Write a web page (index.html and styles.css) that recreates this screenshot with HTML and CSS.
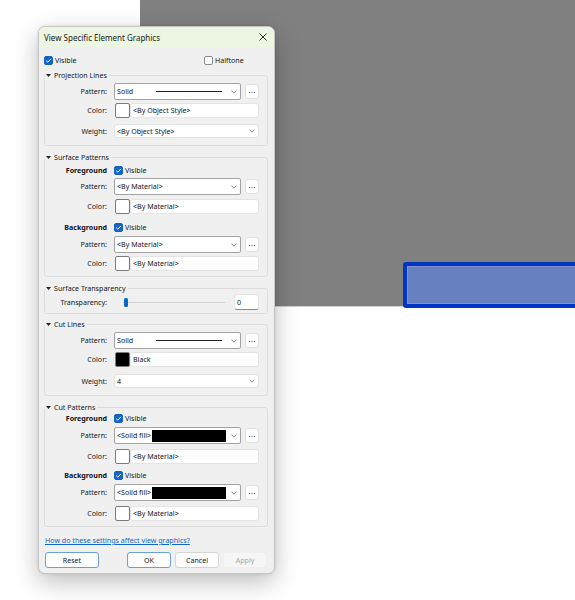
FILE: index.html
```html
<!DOCTYPE html>
<html lang="en">
<head>
<meta charset="utf-8">
<title>View Specific Element Graphics</title>
<link rel="stylesheet" href="styles.css">
</head>
<body>
<div class="stage">
  <div class="view-area"></div>
  <div class="selected-element"></div>

  <div class="dialog">
    <div class="titlebar">
      <span class="title">View Specific Element Graphics</span>
      <svg class="close" viewBox="0 0 8 8"><path d="M0.5 0.5L7.5 7.5M7.5 0.5L0.5 7.5"/></svg>
    </div>
    <div class="content">
      <div class="top-row">
        <div class="check"><span class="box on"><svg viewBox="0 0 9 9"><path d="M2.1 4.6L3.8 6.2L6.9 2.9"/></svg></span><span>Visible</span></div>
        <div class="check"><span class="box"></span><span>Halftone</span></div>
      </div>

      <fieldset class="group g1">
        <legend><svg class="tri" viewBox="0 0 5 3"><polygon points="0,0 5,0 2.5,3"/></svg>Projection Lines</legend>
        <div class="row">
          <span class="lbl">Pattern:</span>
          <div class="ctl">
            <div class="combo"><span class="ctext">Solid</span><span class="pline"></span><svg class="chev" viewBox="0 0 6 4"><polyline points="0.5,0.6 3,3.2 5.5,0.6"/></svg></div>
            <span class="more"><svg viewBox="0 0 14 15"><rect x="4" y="8" width="1" height="1"/><rect x="6.5" y="8" width="1" height="1"/><rect x="9" y="8" width="1" height="1"/></svg></span>
          </div>
        </div>
        <div class="row m3">
          <span class="lbl">Color:</span>
          <div class="color"><span class="swatch"></span><span class="field">&lt;By Object Style&gt;</span></div>
        </div>
        <div class="row m6">
          <span class="lbl">Weight:</span>
          <div class="dropdown"><span>&lt;By Object Style&gt;</span><svg class="chev" viewBox="0 0 6 4"><polyline points="0.5,0.6 3,3.2 5.5,0.6"/></svg></div>
        </div>
      </fieldset>

      <fieldset class="group g2">
        <legend><svg class="tri" viewBox="0 0 5 3"><polygon points="0,0 5,0 2.5,3"/></svg>Surface Patterns</legend>
        <div class="row">
          <span class="lbl strong">Foreground</span>
          <div class="check"><span class="box on"><svg viewBox="0 0 9 9"><path d="M2.1 4.6L3.8 6.2L6.9 2.9"/></svg></span><span>Visible</span></div>
        </div>
        <div class="row m3">
          <span class="lbl">Pattern:</span>
          <div class="ctl">
            <div class="combo"><span class="ctext">&lt;By Material&gt;</span><svg class="chev" viewBox="0 0 6 4"><polyline points="0.5,0.6 3,3.2 5.5,0.6"/></svg></div>
            <span class="more"><svg viewBox="0 0 14 15"><rect x="4" y="8" width="1" height="1"/><rect x="6.5" y="8" width="1" height="1"/><rect x="9" y="8" width="1" height="1"/></svg></span>
          </div>
        </div>
        <div class="row m4">
          <span class="lbl">Color:</span>
          <div class="color"><span class="swatch"></span><span class="field">&lt;By Material&gt;</span></div>
        </div>
        <div class="row m9">
          <span class="lbl strong">Background</span>
          <div class="check"><span class="box on"><svg viewBox="0 0 9 9"><path d="M2.1 4.6L3.8 6.2L6.9 2.9"/></svg></span><span>Visible</span></div>
        </div>
        <div class="row m4">
          <span class="lbl">Pattern:</span>
          <div class="ctl">
            <div class="combo"><span class="ctext">&lt;By Material&gt;</span><svg class="chev" viewBox="0 0 6 4"><polyline points="0.5,0.6 3,3.2 5.5,0.6"/></svg></div>
            <span class="more"><svg viewBox="0 0 14 15"><rect x="4" y="8" width="1" height="1"/><rect x="6.5" y="8" width="1" height="1"/><rect x="9" y="8" width="1" height="1"/></svg></span>
          </div>
        </div>
        <div class="row m3">
          <span class="lbl">Color:</span>
          <div class="color"><span class="swatch"></span><span class="field">&lt;By Material&gt;</span></div>
        </div>
      </fieldset>

      <fieldset class="group g3">
        <legend><svg class="tri" viewBox="0 0 5 3"><polygon points="0,0 5,0 2.5,3"/></svg>Surface Transparency</legend>
        <div class="row">
          <span class="lbl">Transparency:</span>
          <div class="ctl">
            <div class="slider"><span class="thumb"></span></div>
            <span class="num">0</span>
          </div>
        </div>
      </fieldset>

      <fieldset class="group g4">
        <legend><svg class="tri" viewBox="0 0 5 3"><polygon points="0,0 5,0 2.5,3"/></svg>Cut Lines</legend>
        <div class="row">
          <span class="lbl">Pattern:</span>
          <div class="ctl">
            <div class="combo"><span class="ctext">Solid</span><span class="pline"></span><svg class="chev" viewBox="0 0 6 4"><polyline points="0.5,0.6 3,3.2 5.5,0.6"/></svg></div>
            <span class="more"><svg viewBox="0 0 14 15"><rect x="4" y="8" width="1" height="1"/><rect x="6.5" y="8" width="1" height="1"/><rect x="9" y="8" width="1" height="1"/></svg></span>
          </div>
        </div>
        <div class="row m3">
          <span class="lbl">Color:</span>
          <div class="color"><span class="swatch black"></span><span class="field">Black</span></div>
        </div>
        <div class="row m7">
          <span class="lbl">Weight:</span>
          <div class="dropdown"><span>4</span><svg class="chev" viewBox="0 0 6 4"><polyline points="0.5,0.6 3,3.2 5.5,0.6"/></svg></div>
        </div>
      </fieldset>

      <fieldset class="group g5">
        <legend><svg class="tri" viewBox="0 0 5 3"><polygon points="0,0 5,0 2.5,3"/></svg>Cut Patterns</legend>
        <div class="row">
          <span class="lbl strong">Foreground</span>
          <div class="check"><span class="box on"><svg viewBox="0 0 9 9"><path d="M2.1 4.6L3.8 6.2L6.9 2.9"/></svg></span><span>Visible</span></div>
        </div>
        <div class="row m4">
          <span class="lbl">Pattern:</span>
          <div class="ctl">
            <div class="combo"><span class="ctext">&lt;Solid fill&gt;</span><span class="fill-sample"></span><svg class="chev" viewBox="0 0 6 4"><polyline points="0.5,0.6 3,3.2 5.5,0.6"/></svg></div>
            <span class="more"><svg viewBox="0 0 14 15"><rect x="4" y="8" width="1" height="1"/><rect x="6.5" y="8" width="1" height="1"/><rect x="9" y="8" width="1" height="1"/></svg></span>
          </div>
        </div>
        <div class="row m5">
          <span class="lbl">Color:</span>
          <div class="color"><span class="swatch"></span><span class="field">&lt;By Material&gt;</span></div>
        </div>
        <div class="row m7">
          <span class="lbl strong">Background</span>
          <div class="check"><span class="box on"><svg viewBox="0 0 9 9"><path d="M2.1 4.6L3.8 6.2L6.9 2.9"/></svg></span><span>Visible</span></div>
        </div>
        <div class="row m4">
          <span class="lbl">Pattern:</span>
          <div class="ctl">
            <div class="combo"><span class="ctext">&lt;Solid fill&gt;</span><span class="fill-sample"></span><svg class="chev" viewBox="0 0 6 4"><polyline points="0.5,0.6 3,3.2 5.5,0.6"/></svg></div>
            <span class="more"><svg viewBox="0 0 14 15"><rect x="4" y="8" width="1" height="1"/><rect x="6.5" y="8" width="1" height="1"/><rect x="9" y="8" width="1" height="1"/></svg></span>
          </div>
        </div>
        <div class="row m5">
          <span class="lbl">Color:</span>
          <div class="color"><span class="swatch"></span><span class="field">&lt;By Material&gt;</span></div>
        </div>
      </fieldset>

      <a class="help" href="#">How do these settings affect view graphics?</a>

      <div class="buttons">
        <button class="btn reset focus">Reset</button>
        <button class="btn focus">OK</button>
        <button class="btn">Cancel</button>
        <button class="btn disabled">Apply</button>
      </div>
    </div>
  </div>
</div>
</body>
</html>
```
FILE: styles.css
```css
* { box-sizing: border-box; }
html, body { margin: 0; padding: 0; }
body {
  width: 575px;
  height: 600px;
  overflow: hidden;
  background: #ffffff;
  font-family: "Noto Sans", "Liberation Sans", sans-serif;
  font-size: 7.1px;
  line-height: 9px;
  color: #161616;
}
.stage { position: relative; width: 575px; height: 600px; }

.view-area {
  position: absolute;
  left: 140px; top: 0;
  width: 435px; height: 307px;
  background: #808080;
  border-bottom: 1px solid #cfcfcf;
}
.selected-element {
  position: absolute;
  left: 403px; top: 262px;
  width: 180px; height: 46px;
  background: #6680c0;
  border: 4px solid #0037c2;
  border-radius: 3px;
  box-shadow: inset 0 0 0 1px #7d93cc;
}

.dialog {
  position: absolute;
  left: 38px; top: 26px;
  width: 237px; height: 548px;
  background: #f0f0f0;
  border: 1px solid #c6c6c6;
  border-radius: 7px;
  overflow: hidden;
  box-shadow: 0 8px 24px rgba(0,0,0,0.26), 0 0 3px rgba(0,0,0,0.12);
}
.titlebar {
  height: 20px;
  background: #edf5e3;
  display: flex;
  align-items: center;
  justify-content: space-between;
  padding: 0 7px 0 5px;
}
.title { font-size: 8px; line-height: 11px; color: #1a1a1a; }
.close { width: 8px; height: 8px; }
.close path { stroke: #333; stroke-width: 1; fill: none; }

.content { padding: 9px 6px 0 5px; }

.top-row {
  display: grid;
  grid-template-columns: 160px auto;
  height: 9px;
  align-items: center;
}
.check { display: flex; align-items: center; gap: 2px; height: 9px; }
.box {
  width: 9px; height: 9px;
  border: 1px solid #8a8a8a;
  border-radius: 2px;
  background: #ffffff;
  display: block;
  flex: none;
}
.box.on { background: #1464c6; border-color: #1464c6; }
.box svg { display: block; width: 9px; height: 9px; margin: -1px; }
.box path { stroke: #ffffff; stroke-width: 1; fill: none; }

.group {
  margin: 0;
  padding: 0;
  min-width: 0;
  border: 1px solid #dcdcdc;
  border-radius: 3px;
}
.group legend {
  padding: 0 2px 0 1px;
  height: 12px;
  line-height: 12px;
  color: #161616;
}
.tri { width: 5px; height: 3px; margin-right: 3px; vertical-align: 1px; }
.tri polygon { fill: #222; }

.g1 { margin-top: 4px; padding: 2px 0 7px; }
.g2 { margin-top: 5px; padding: 3px 0 5px; }
.g3 { margin-top: 5px; padding: 0 0 3px; }
.g4 { margin-top: 4px; padding: 2px 0 7px; }
.g5 { margin-top: 5px; padding: 1px 0 5px; }

.m3 { margin-top: 3px; }
.m4 { margin-top: 4px; }
.m5 { margin-top: 5px; }
.m6 { margin-top: 6px; }
.m7 { margin-top: 7px; }
.m9 { margin-top: 9px; }

.row {
  display: grid;
  grid-template-columns: 62px 145px;
  column-gap: 7px;
  align-items: center;
}
.lbl { text-align: right; white-space: nowrap; }
.lbl.strong { font-weight: bold; color: #111; }

.ctl { display: flex; align-items: center; }

.combo {
  width: 127px; height: 17px;
  background: #ffffff;
  border: 1px solid #a3a3a3;
  border-radius: 2px;
  display: flex;
  align-items: center;
  padding: 0 3px 0 2px;
}
.ctext { flex: 1; white-space: nowrap; }
.pline { width: 66px; height: 1px; background: #222; margin-right: 9px; }
.fill-sample { width: 74px; height: 12px; background: #000; margin-right: 5px; }
.chev { width: 6px; height: 4px; flex: none; }
.chev polyline { stroke: #666; stroke-width: 0.8; fill: none; }

.more {
  width: 14px; height: 15px;
  margin-left: 4px;
  background: #fdfdfd;
  border: 1px solid #e0e0e0;
  border-radius: 3px;
  display: block;
}
.more svg { display: block; width: 14px; height: 15px; margin: -1px; }
.more rect { fill: #2e4c7e; }

.color { display: flex; width: 144px; height: 15px; margin-left: 1px; }
.swatch {
  width: 15px; height: 15px;
  border: 1px solid #7b7b7b;
  border-radius: 2px;
  background: #ffffff;
  flex: none;
}
.swatch.black { background: #000000; }
.field {
  flex: 1;
  background: #ffffff;
  border: 1px solid #e4e4e4;
  border-radius: 3px;
  padding-left: 2px;
  display: flex;
  align-items: center;
}

.dropdown {
  width: 145px; height: 14px;
  background: #ffffff;
  border: 1px solid #e2e2e2;
  border-radius: 3px;
  padding: 0 3px 0 2px;
  display: flex;
  align-items: center;
  justify-content: space-between;
}

.slider {
  width: 102px; height: 9px;
  margin-left: 9px;
  background: linear-gradient(#d2d2d2, #d2d2d2) center / 100% 1px no-repeat;
  display: flex;
}
.thumb { width: 4px; height: 9px; margin-left: 1px; background: #0a67c8; border-radius: 1.5px; }
.num {
  width: 25px; height: 16px;
  margin-left: 9px;
  background: #ffffff;
  border: 1px solid #e4e4e4;
  border-bottom-color: #8a8a8a;
  border-radius: 3px;
  padding-left: 2px;
  display: flex;
  align-items: center;
}

.help {
  display: block;
  margin: 8px 0 0 1px;
  height: 10px;
  line-height: 10px;
  color: #1066c8;
  text-decoration: underline;
}

.buttons { display: flex; gap: 4px; margin-top: 7px; padding: 0 1px; }
.btn {
  width: 44px; height: 16px;
  padding: 0;
  font: inherit;
  color: #1b1b1b;
  background: #fdfdfd;
  border: 1px solid #d4d4d4;
  border-radius: 3px;
}
.btn.reset { width: 54px; margin-right: 24px; }
.btn.focus { border-color: #6a9fd8; }
.btn.disabled { background: #f6f6f6; border-color: #efefef; color: #a6a6a6; }
```
